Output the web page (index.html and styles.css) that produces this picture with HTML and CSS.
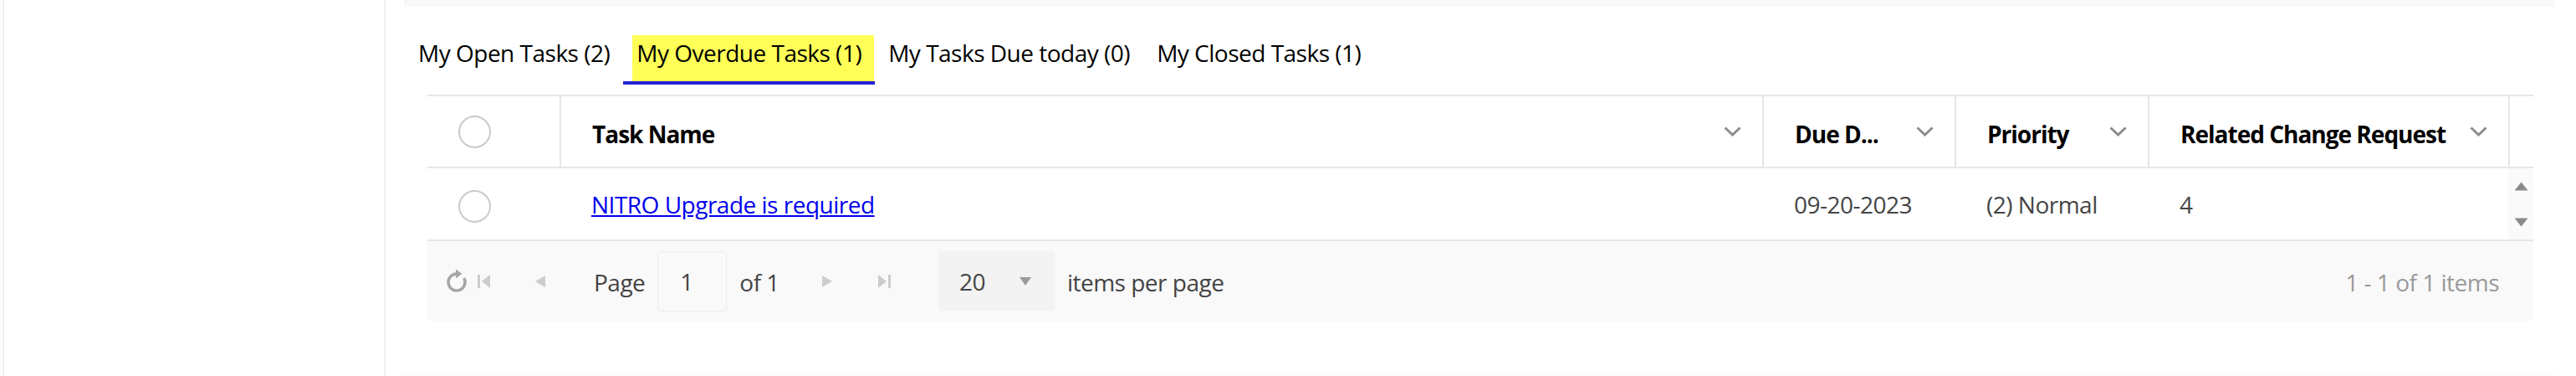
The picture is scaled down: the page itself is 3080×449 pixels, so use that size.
FILE: index.html
```html
<!DOCTYPE html>
<html lang="en">
<head>
<meta charset="utf-8">
<title>My Tasks</title>
<link rel="stylesheet" href="styles.css">
</head>
<body>
<div class="layout">
  <aside class="sidebar"></aside>
  <main class="main">
    <div class="topbar"></div>
    <section class="card">
      <nav class="tabs">
        <a class="tab"><span class="tab-label">My Open Tasks (2)</span></a>
        <a class="tab tab--active"><span class="tab-label">My Overdue Tasks (1)</span></a>
        <a class="tab"><span class="tab-label">My Tasks Due today (0)</span></a>
        <a class="tab"><span class="tab-label">My Closed Tasks (1)</span></a>
      </nav>

      <div class="grid">
        <div class="grid-row grid-head">
          <div class="hcell hcell--check"><span class="check"></span></div>
          <div class="hcell"><span class="htext">Task Name</span>
            <svg class="chev" viewBox="0 0 21 12" width="21" height="12"><polyline points="1.5,1.5 10.5,10 19.5,1.5"/></svg></div>
          <div class="hcell"><span class="htext" title="Due Date">Due D...</span>
            <svg class="chev" viewBox="0 0 21 12" width="21" height="12"><polyline points="1.5,1.5 10.5,10 19.5,1.5"/></svg></div>
          <div class="hcell"><span class="htext">Priority</span>
            <svg class="chev" viewBox="0 0 21 12" width="21" height="12"><polyline points="1.5,1.5 10.5,10 19.5,1.5"/></svg></div>
          <div class="hcell"><span class="htext">Related Change Request</span>
            <svg class="chev" viewBox="0 0 21 12" width="21" height="12"><polyline points="1.5,1.5 10.5,10 19.5,1.5"/></svg></div>
          <div class="hcell hcell--gutter"></div>
        </div>

        <div class="grid-row grid-body">
          <div class="cell cell--check"><span class="check check--row"></span></div>
          <div class="cell"><a class="task-link" href="#">NITRO Upgrade is required</a></div>
          <div class="cell">09-20-2023</div>
          <div class="cell">(2) Normal</div>
          <div class="cell">4</div>
          <div class="cell cell--gutter">
            <svg viewBox="0 0 17 11" width="17" height="11"><path d="M8.5 0.5 L16.5 10.5 L0.5 10.5 Z"/></svg>
            <svg viewBox="0 0 17 11" width="17" height="11"><path d="M0.5 0.5 L16.5 0.5 L8.5 10.5 Z"/></svg>
          </div>
        </div>

        <div class="pager">
          <svg class="pg-refresh" viewBox="0 0 28 30" width="28" height="30">
            <path class="refresh-arc" d="M22.7 11 A10 10 0 1 1 14 6"/>
            <path class="refresh-head" d="M13 0.5 L20.5 6 L13 11.5 Z"/>
          </svg>
          <svg class="pg-first" viewBox="0 0 15 16" width="15" height="16"><rect x="0" y="0" width="3" height="16"/><path d="M15 0 L5 8 L15 16 Z"/></svg>
          <svg class="pg-prev" viewBox="0 0 12 14" width="12" height="14"><path d="M12 0 L0 7 L12 14 Z"/></svg>
          <span class="pg-label">Page</span>
          <span class="pg-input">1</span>
          <span class="pg-of">of 1</span>
          <svg class="pg-next" viewBox="0 0 12 14" width="12" height="14"><path d="M0 0 L12 7 L0 14 Z"/></svg>
          <svg class="pg-last" viewBox="0 0 15 16" width="15" height="16"><path d="M0 0 L10 8 L0 16 Z"/><rect x="12" y="0" width="3" height="16"/></svg>
          <span class="pg-size">20<svg viewBox="0 0 14 10" width="14" height="10"><path d="M0 0 L14 0 L7 10 Z"/></svg></span>
          <span class="pg-per">items per page</span>
          <span class="pg-info">1 - 1 of 1 items</span>
        </div>
      </div>
    </section>
  </main>
</div>
</body>
</html>
```

FILE: styles.css
```css
* { box-sizing: border-box; }

html, body {
  margin: 0;
  height: 449px;
  overflow: hidden;
  background: #fff;
}

body {
  font-family: "Open Sans", "Segoe UI", sans-serif;
  font-size: 28px;
  letter-spacing: -0.5px;
  color: #000;
}

.layout {
  display: flex;
  height: 449px;
}

.sidebar {
  flex: 0 0 458px;
  margin-left: 3px;
  border-left: 2px solid #f0f0f0;
  border-right: 2px solid #efefef;
}

.main {
  flex: 1;
  display: flex;
  flex-direction: column;
  padding: 0 25px 0 22px;
}

.topbar {
  height: 8px;
  background: #f8f8f8;
}

.card {
  height: 440px;
  padding-top: 34px;
  border-bottom: 1px solid #f5f5f5;
}

/* Tabs */
.tabs {
  display: flex;
  padding-left: 1px;
}

.tab {
  padding: 0 16px;
  border-bottom: 4px solid transparent;
  color: #000;
  text-decoration: none;
  white-space: nowrap;
}

.tab-label {
  display: block;
  line-height: 38px;
  padding: 2px 0 15px;
}

.tab--active {
  border-bottom-color: #2424d8;
}

.tab--active .tab-label {
  background: #ffff57;
  padding: 2px 15px 15px 5px;
  margin: 0 -15px 0 -5px;
}

/* Grid */
.grid {
  margin: 12px 26px 0 28px;
  border-top: 2px solid #e6e6e6;
}

.grid-row {
  display: grid;
  grid-template-columns: 158px 1fr 230px 231px 431px 30px;
}

.grid-head {
  height: 86px;
  border-bottom: 2px solid #e6e6e6;
}

.hcell {
  display: flex;
  align-items: center;
  padding: 0 25px 0 37px;
  border-left: 2px solid #e6e6e6;
  font-weight: 700;
  letter-spacing: -1px;
  line-height: 38px;
  min-width: 0;
}

.htext {
  flex: 1;
  white-space: nowrap;
  padding-top: 5px;
}

.hcell--check {
  border-left: none;
  padding: 0 0 0 37px;
}

.hcell--gutter {
  padding: 0;
}

.chev {
  flex: 0 0 auto;
  fill: none;
  stroke: #8c8c8c;
  stroke-width: 3;
}

.check {
  display: block;
  width: 39px;
  height: 39px;
  border: 2px solid #cacaca;
  border-radius: 50%;
  background: #fff;
}

.check--row {
  margin-top: 6px;
}

.grid-body {
  height: 87px;
  border-bottom: 2px solid #e6e6e6;
  color: #444;
}

.cell {
  display: flex;
  align-items: center;
  padding-left: 38px;
  line-height: 38px;
  white-space: nowrap;
}

.cell--check {
  padding-left: 37px;
}

.cell--gutter {
  padding: 16px 0 15px;
  flex-direction: column;
  justify-content: space-between;
  align-items: center;
  background: #fafafa;
  fill: #8a8a8a;
}

.task-link {
  color: #0000ee;
  text-decoration: underline;
}

/* Pager */
.pager {
  display: flex;
  align-items: center;
  height: 95px;
  background: #f9f9f9;
  color: #444;
  line-height: 38px;
  white-space: nowrap;
}

.pager svg { flex: 0 0 auto; }

.pg-refresh { margin-left: 21px; }
.refresh-arc { fill: none; stroke: #a6a6a6; stroke-width: 3.5; }
.refresh-head { fill: #a6a6a6; }

.pg-first { margin-left: 11px; fill: #cccccc; }
.pg-prev { margin-left: 54px; fill: #cccccc; }

.pg-label { margin-left: 58px; padding-top: 2px; }

.pg-input {
  width: 83px;
  height: 72px;
  margin-left: 15px;
  padding-left: 26px;
  border: 1px solid #ececec;
  border-radius: 4px;
  line-height: 70px;
}

.pg-of { margin-left: 15px; padding-top: 2px; }

.pg-next { margin-left: 51px; fill: #cccccc; }
.pg-last { margin-left: 55px; fill: #cccccc; }

.pg-size {
  display: flex;
  align-items: center;
  justify-content: space-between;
  width: 139px;
  height: 71px;
  margin-left: 57px;
  padding: 0 28px 0 25px;
  background: #f3f3f3;
  border-radius: 4px;
  fill: #9c9c9c;
}

.pg-per { margin-left: 15px; padding-top: 2px; }

.pg-info {
  margin-left: auto;
  margin-right: 41px;
  padding-top: 2px;
  color: #999;
}
```
